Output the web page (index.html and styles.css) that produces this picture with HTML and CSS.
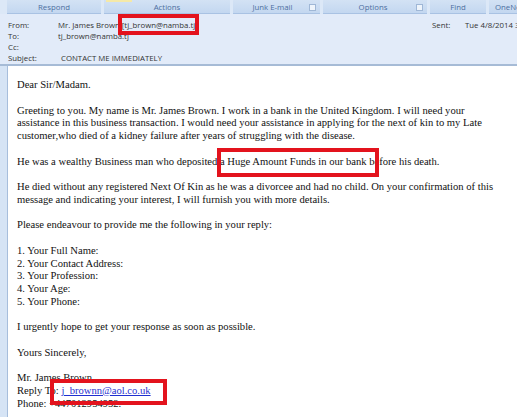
FILE: index.html
```html
<!DOCTYPE html>
<html>
<head>
<meta charset="utf-8">
<link rel="stylesheet" href="styles.css">
</head>
<body>
<div class="page">
  <div class="ribbon">
    <div class="group g-respond"><span>Respond</span></div>
    <div class="group g-actions"><i class="glow"></i><span>Actions</span></div>
    <div class="group g-junk"><span>Junk E-mail</span><b class="launch"></b></div>
    <div class="group g-options"><span>Options</span><b class="launch"></b></div>
    <div class="group g-find"><span>Find</span></div>
    <div class="group g-one"><span>OneNote</span></div>
  </div>
  <div class="header">
    <div class="fields">
      <div class="row"><span class="lbl">From:</span><span class="val">Mr. James Brown [tj_brown@namba.tj]</span></div>
      <div class="row"><span class="lbl">To:</span><span class="val">tj_brown@namba.tj</span></div>
      <div class="row"><span class="lbl">Cc:</span><span class="val"></span></div>
      <div class="row"><span class="lbl">Subject:</span><span class="val subj">CONTACT ME IMMEDIATELY</span></div>
    </div>
    <div class="sent"><span class="lbl-sent">Sent:</span><span class="date">Tue 4/8/2014 3:48 AM</span></div>
  </div>
  <div class="mail">
    <p>Dear Sir/Madam.</p>
    <p>Greeting to you. My name is Mr. James Brown. I work in a bank in the United Kingdom. I will need your assistance in this business transaction. I would need your assistance in applying for the next of kin to my Late customer,who died of a kidney failure after years of struggling with the disease.</p>
    <p>He was a wealthy Business man who deposited a Huge Amount Funds in our bank before his death.</p>
    <p>He died without any registered Next Of Kin as he was a divorcee and had no child. On your confirmation of this message and indicating your interest, I will furnish you with more details.</p>
    <p>Please endeavour to provide me the following in your reply:</p>
    <p>1. Your Full Name:<br>2. Your Contact Address:<br>3. Your Profession:<br>4. Your Age:<br>5. Your Phone:</p>
    <p>I urgently hope to get your response as soon as possible.</p>
    <p>Yours Sincerely,</p>
    <p>Mr. James Brown.<br>Reply To: <a href="#">j_brownn@aol.co.uk</a><br>Phone: +447012954952.</p>
  </div>
  <div class="mark m1"></div>
  <div class="mark m2"></div>
  <div class="mark m3"></div>
</div>
</body>
</html>
```

FILE: styles.css
```css
html, body {
  margin: 0;
  padding: 0;
  background: #d6e4f5;
  overflow: hidden;
}
.page {
  position: relative;
  width: 517px;
  height: 417px;
  overflow: hidden;
  background: #d6e4f5;
}
.ribbon {
  display: flex;
  height: 14px;
  padding-left: 7px;
  gap: 3px;
  background: #dce8f7;
  overflow: hidden;
}
.group {
  position: relative;
  display: flex;
  align-items: center;
  justify-content: center;
  flex: none;
  height: 14px;
  background: linear-gradient(#d3e2f4, #c3d7f0);
  border-bottom: 1px solid #a9c2e3;
  box-sizing: border-box;
  font-family: "Open Sans", "DejaVu Sans", sans-serif;
  font-size: 7.8px;
  color: #4d6f9f;
  white-space: nowrap;
}
.g-respond { width: 94px; }
.g-actions { width: 126px; }
.g-junk { width: 87px; }
.g-options { width: 104px; }
.g-find { width: 56px; }
.g-one { width: 40px; justify-content: flex-start; padding-left: 6px; }
.g-junk span { margin-right: 8px; }
.g-options span { margin-right: 4px; }
.launch {
  position: absolute;
  right: 4px;
  top: 4px;
  width: 5px;
  height: 5px;
  border: 1px solid #9fb7d6;
  background: #eef4fb;
}
.glow {
  position: absolute;
  left: 2px;
  top: 0;
  width: 26px;
  height: 2px;
  background: #f5e9a8;
}
.header {
  display: flex;
  justify-content: space-between;
  height: 52px;
  padding: 6px 0 0 8px;
  box-sizing: border-box;
  background: #e2ebf9;
  border-bottom: 2px solid #a6bbd6;
  font-family: "Open Sans", "DejaVu Sans", sans-serif;
  font-size: 7.8px;
  color: #333;
  overflow: hidden;
}
.fields {
  display: flex;
  flex-direction: column;
}
.row {
  display: flex;
  height: 11px;
  line-height: 11px;
  white-space: nowrap;
}
.lbl {
  width: 50px;
  flex: none;
}
.subj {
  padding-left: 3px;
}
.sent {
  display: flex;
  flex: none;
  height: 11px;
  line-height: 11px;
  width: 85px;
  white-space: nowrap;
}
.lbl-sent {
  width: 33px;
  flex: none;
}
.date {
  flex: none;
}
.mail {
  margin-left: 7px;
  height: 351px;
  padding: 13px 9px 0 9px;
  box-sizing: border-box;
  background: #fff;
  border-left: 1px solid #a7bedc;
  font-family: "Liberation Serif", "Times New Roman", serif;
  font-size: 10.6px;
  line-height: 12.75px;
  color: #111;
}
.mail p {
  margin: 0 0 12.75px 0;
}
.mail a {
  color: #1f2fd0;
  text-decoration: underline;
}
.mark {
  position: absolute;
  border: 4px solid #e3131d;
  box-sizing: border-box;
}
.m1 { left: 118px; top: 14px; width: 81px; height: 21px; }
.m2 { left: 217px; top: 148px; width: 162px; height: 29px; }
.m3 { left: 50px; top: 379px; width: 117px; height: 26px; }
```
